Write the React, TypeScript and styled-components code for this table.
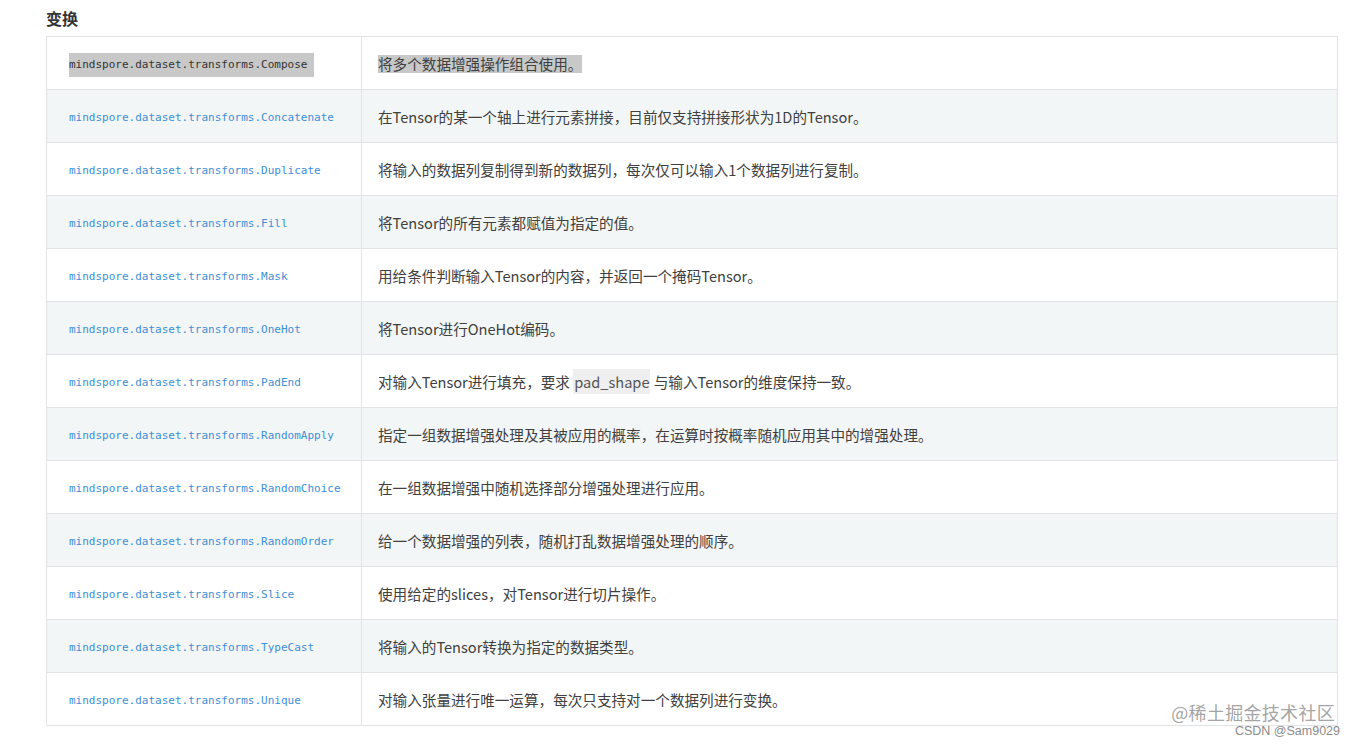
import React from "react";
import styled, { createGlobalStyle } from "styled-components";

const GlobalStyle = createGlobalStyle`
  html, body { margin: 0; padding: 0; background: #ffffff; }
  body { font-family: "Noto Sans CJK SC", "Noto Sans", sans-serif; color: #404040; }
`;

const Page = styled.div`
  position: relative;
  width: 1355px;
  height: 746px;
  box-sizing: border-box;
  padding: 4px 17px 0 46px;
  overflow: hidden;
`;

const Heading = styled.h3`
  margin: 0 0 4px 0;
  font-size: 16px;
  line-height: 28px;
  font-weight: 700;
  color: #333333;
`;

const Table = styled.table`
  width: 100%;
  border-collapse: collapse;
  border: 1px solid #e1e4e5;
  table-layout: fixed;
`;

const Row = styled.tr<{ $striped: boolean }>`
  background: ${(p) => (p.$striped ? "#f3f6f6" : "#ffffff")};
`;

const NameCell = styled.td`
  width: 315px;
  height: 53px;
  box-sizing: border-box;
  padding: 0 0 0 22px;
  border: 1px solid #e1e4e5;
  vertical-align: middle;
`;

const DescCell = styled.td`
  height: 53px;
  box-sizing: border-box;
  padding: 0 0 0 16px;
  border: 1px solid #e1e4e5;
  vertical-align: middle;
  font-size: 14.6px;
  color: #404040;
  white-space: nowrap;
`;

const Code = styled.code<{ $selected: boolean }>`
  font-family: "DejaVu Sans Mono", monospace;
  font-size: 11px;
  line-height: 24px;
  display: inline-block;
  color: ${(p) => (p.$selected ? "#333333" : "#3d8fd6")};
  background: ${(p) => (p.$selected ? "#c8c8c8" : "transparent")};
  padding-right: ${(p) => (p.$selected ? "7px" : "0")};
`;

const Selected = styled.span`
  background: #c8c8c8;
  line-height: 18px;
  display: inline-block;
`;

const Literal = styled.span`
  background: #efefef;
  color: #555555;
  padding: 2px 1px;
`;

const Watermark = styled.div`
  position: absolute;
  right: 20px;
  bottom: 21px;
  font-size: 18px;
  color: rgba(140, 140, 140, 0.8);
  letter-spacing: 0.3px;
`;

const Credit = styled.div`
  position: absolute;
  right: 15px;
  bottom: 8px;
  font-family: "Liberation Sans", Arial, sans-serif;
  font-size: 12.5px;
  color: #8a8a8a;
`;

type Item = { name: string; desc: React.ReactNode };

const items: Item[] = [
  { name: "Compose", desc: "将多个数据增强操作组合使用。" },
  { name: "Concatenate", desc: "在Tensor的某一个轴上进行元素拼接，目前仅支持拼接形状为1D的Tensor。" },
  { name: "Duplicate", desc: "将输入的数据列复制得到新的数据列，每次仅可以输入1个数据列进行复制。" },
  { name: "Fill", desc: "将Tensor的所有元素都赋值为指定的值。" },
  { name: "Mask", desc: "用给条件判断输入Tensor的内容，并返回一个掩码Tensor。" },
  { name: "OneHot", desc: "将Tensor进行OneHot编码。" },
  {
    name: "PadEnd",
    desc: (
      <>
        对输入Tensor进行填充，要求 <Literal>pad_shape</Literal> 与输入Tensor的维度保持一致。
      </>
    ),
  },
  { name: "RandomApply", desc: "指定一组数据增强处理及其被应用的概率，在运算时按概率随机应用其中的增强处理。" },
  { name: "RandomChoice", desc: "在一组数据增强中随机选择部分增强处理进行应用。" },
  { name: "RandomOrder", desc: "给一个数据增强的列表，随机打乱数据增强处理的顺序。" },
  { name: "Slice", desc: "使用给定的slices，对Tensor进行切片操作。" },
  { name: "TypeCast", desc: "将输入的Tensor转换为指定的数据类型。" },
  { name: "Unique", desc: "对输入张量进行唯一运算，每次只支持对一个数据列进行变换。" },
];

export default function App() {
  return (
    <>
      <GlobalStyle />
      <Page>
        <Heading>变换</Heading>
        <Table>
          <tbody>
            {items.map((it, i) => (
              <Row key={it.name} $striped={i % 2 === 1}>
                <NameCell>
                  <Code $selected={i === 0}>mindspore.dataset.transforms.{it.name}</Code>
                </NameCell>
                <DescCell>{i === 0 ? <Selected>{it.desc}</Selected> : it.desc}</DescCell>
              </Row>
            ))}
          </tbody>
        </Table>
        <Watermark>@稀土掘金技术社区</Watermark>
        <Credit>CSDN @Sam9029</Credit>
      </Page>
    </>
  );
}
